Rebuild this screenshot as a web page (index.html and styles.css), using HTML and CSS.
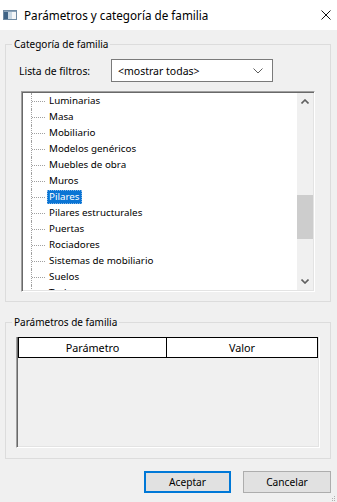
FILE: index.html
```html
<!DOCTYPE html>
<html lang="es">
<head>
<meta charset="utf-8">
<title>Parámetros y categoría de familia</title>
<link rel="stylesheet" href="styles.css">
</head>
<body>
<div class="dialog">
  <div class="titlebar">
    <svg class="app-icon" width="14" height="10" viewBox="0 0 14 10">
      <rect x="0.5" y="0.5" width="13" height="9" fill="#c9d8e4" stroke="#6f8aa3"/>
      <rect x="1" y="1" width="4" height="8" fill="#3f6386"/>
      <rect x="9" y="1" width="4" height="8" fill="#f4f6f8"/>
      <rect x="1" y="1" width="12" height="1" fill="#8aa2b8"/>
    </svg>
    <span class="title">Parámetros y categoría de familia</span>
    <svg class="close" width="10" height="10" viewBox="0 0 10 10">
      <path d="M0.5 0.5 L9.5 9.5 M9.5 0.5 L0.5 9.5" stroke="#111" stroke-width="1" fill="none"/>
    </svg>
  </div>
  <div class="body">
    <fieldset class="group group-cat">
      <legend>Categoría de familia</legend>
      <div class="group-body">
        <div class="filter-row">
          <label class="filter-label">Lista de filtros:</label>
          <div class="combo">
            <span>&lt;mostrar todas&gt;</span>
            <svg class="combo-arrow" width="10" height="6" viewBox="0 0 10 6">
              <polyline points="0.5,0.5 5,5 9.5,0.5" fill="none" stroke="#5d5d5d" stroke-width="1"/>
            </svg>
          </div>
        </div>
        <div class="tree">
          <ul class="tree-list">
            <li><span>Luminarias</span></li>
            <li><span>Masa</span></li>
            <li><span>Mobiliario</span></li>
            <li><span>Modelos genéricos</span></li>
            <li><span>Muebles de obra</span></li>
            <li><span>Muros</span></li>
            <li class="selected"><span>Pilares</span></li>
            <li><span>Pilares estructurales</span></li>
            <li><span>Puertas</span></li>
            <li><span>Rociadores</span></li>
            <li><span>Sistemas de mobiliario</span></li>
            <li><span>Suelos</span></li>
            <li><span>Techos</span></li>
          </ul>
          <div class="vscroll">
            <div class="sb-btn">
              <svg width="8" height="5" viewBox="0 0 8 5"><polyline points="0.5,4.5 4,1 7.5,4.5" fill="none" stroke="#606060" stroke-width="1.6"/></svg>
            </div>
            <div class="sb-track"><div class="sb-thumb"></div></div>
            <div class="sb-btn">
              <svg width="8" height="5" viewBox="0 0 8 5"><polyline points="0.5,0.5 4,4 7.5,0.5" fill="none" stroke="#606060" stroke-width="1.6"/></svg>
            </div>
          </div>
        </div>
      </div>
    </fieldset>
    <fieldset class="group group-params">
      <legend>Parámetros de familia</legend>
      <div class="group-body">
        <div class="grid">
          <div class="grid-head">
            <div class="grid-col">Parámetro</div>
            <div class="grid-col">Valor</div>
          </div>
        </div>
      </div>
    </fieldset>
    <div class="buttons">
      <button class="btn btn-default">Aceptar</button>
      <button class="btn">Cancelar</button>
    </div>
    <svg class="grip" width="5" height="5" viewBox="0 0 5 5">
      <rect x="3" y="0" width="1" height="1" fill="#b0b0b0"/>
      <rect x="1" y="2" width="1" height="1" fill="#b0b0b0"/>
      <rect x="3" y="2" width="1" height="1" fill="#b0b0b0"/>
      <rect x="3" y="4" width="1" height="1" fill="#b0b0b0"/>
      <rect x="1" y="4" width="1" height="1" fill="#b0b0b0"/>
    </svg>
  </div>
</div>
</body>
</html>
```
FILE: styles.css
```css
html, body {
  margin: 0;
  padding: 0;
}
body {
  width: 337px;
  height: 502px;
  overflow: hidden;
  font-family: "Noto Sans", "Liberation Sans", sans-serif;
  color: #000;
}
.dialog {
  width: 337px;
  height: 502px;
  display: flex;
  flex-direction: column;
}
.titlebar {
  height: 30px;
  flex: none;
  background: #fff;
  display: flex;
  align-items: center;
  padding: 0 6px 0 3px;
}
.app-icon {
  flex: none;
  margin-right: 7px;
}
.title {
  font-size: 11.7px;
  line-height: 14px;
}
.close {
  margin-left: auto;
  flex: none;
}
.body {
  flex: 1;
  position: relative;
  background: #f0f0f0;
  padding: 8px 6px 0 5px;
  box-sizing: border-box;
}
.group {
  margin: 0;
  padding: 0;
  min-width: 0;
  border: 1px solid #dcdcdc;
}
.group legend {
  margin-left: 6px;
  padding: 0 2px;
  font-size: 10px;
  line-height: 12px;
}
.group-cat .group-body {
  padding: 9px 15px 9px 15px;
}
.filter-row {
  display: flex;
  align-items: center;
  height: 23px;
}
.filter-label {
  width: 92px;
  margin-left: -2px;
  font-size: 10.4px;
}
.combo {
  width: 162px;
  height: 23px;
  box-sizing: border-box;
  border: 1px solid #7a7a7a;
  background: #fff;
  display: flex;
  align-items: center;
  padding: 0 9px 0 6px;
  font-size: 10.5px;
}
.combo-arrow {
  margin-left: auto;
}
.tree {
  margin-top: 9px;
  height: 201px;
  box-sizing: border-box;
  border-top: 1px solid #a0a0a0;
  border-left: 1px solid #a0a0a0;
  border-right: 1px solid #fff;
  border-bottom: 1px solid #fff;
  box-shadow: inset 1px 1px 0 #696969, inset -1px -1px 0 #e3e3e3;
  background: #fff;
  display: flex;
  padding: 1px;
}
.tree-list {
  list-style: none;
  margin: 0;
  padding: 0 0 0 8px;
  flex: 1;
  overflow: hidden;
  font-size: 9.8px;
}
.tree-list li {
  height: 16px;
  display: flex;
  align-items: center;
  border-left: 1px dotted #a0a0a0;
}
.tree-list li::before {
  content: "";
  flex: none;
  width: 13px;
  margin-right: 2px;
  border-top: 1px dotted #a0a0a0;
}
.tree-list li span {
  height: 14px;
  line-height: 14px;
  padding: 0 2px;
  white-space: nowrap;
}
.tree-list li.selected span {
  background: #0a74d4;
  color: #fff;
  outline: 1px dotted #7fb4e6;
  outline-offset: -1px;
}
.vscroll {
  width: 16px;
  flex: none;
  background: #f0f0f0;
  display: flex;
  flex-direction: column;
}
.sb-btn {
  height: 17px;
  flex: none;
  display: flex;
  align-items: center;
  justify-content: center;
}
.sb-track {
  flex: 1;
}
.sb-thumb {
  margin-top: 85px;
  height: 44px;
  background: #cdcdcd;
}
.group-params {
  margin-top: 14px;
}
.group-params .group-body {
  padding: 9px 10px 10px 10px;
}
.grid {
  height: 111px;
  box-sizing: border-box;
  border-left: 1px solid #a0a0a0;
  border-right: 1px solid #fff;
  border-bottom: 1px solid #fff;
  box-shadow: inset 1px 0 0 #696969, inset -1px -1px 0 #e3e3e3;
  padding-left: 1px;
  padding-right: 1px;
}
.grid-head {
  display: grid;
  grid-template-columns: 148px 1fr;
  height: 21px;
  box-sizing: border-box;
  border: 1px solid #000;
  background: #fff;
}
.grid-col {
  display: flex;
  align-items: center;
  justify-content: center;
  font-size: 10.8px;
}
.grid-col:first-child {
  border-right: 1px solid #000;
}
.buttons {
  margin-top: 12px;
  display: flex;
  justify-content: flex-end;
  gap: 12px;
}
.btn {
  height: 22px;
  box-sizing: border-box;
  background: #e1e1e1;
  border: 1px solid #adadad;
  font-family: "Noto Sans", "Liberation Sans", sans-serif;
  font-size: 10.2px;
  color: #000;
  padding: 0;
  width: 88px;
}
.btn-default {
  width: 87px;
  border: 2px solid #0078d7;
}
.grip {
  position: absolute;
  right: 1px;
  bottom: 1px;
}
```
